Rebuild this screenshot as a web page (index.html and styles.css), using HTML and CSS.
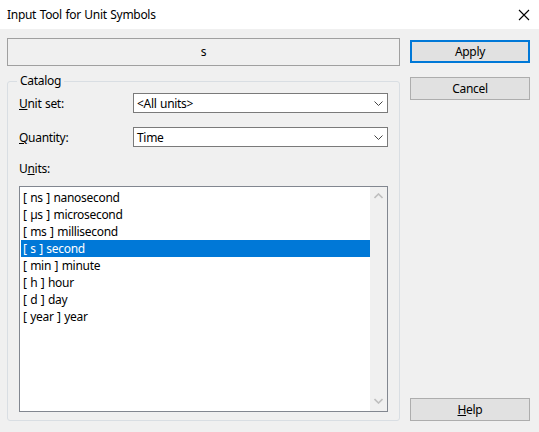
FILE: index.html
```html
<!DOCTYPE html>
<html>
<head>
<meta charset="utf-8">
<link rel="stylesheet" href="styles.css">
</head>
<body>
<div class="window">
  <div class="titlebar">
    <span class="title">Input Tool for Unit Symbols</span>
    <svg class="close" width="12" height="12" viewBox="0 0 12 12"><path d="M1 1 L11 11 M11 1 L1 11" stroke="#000" stroke-width="1.1" fill="none"/></svg>
  </div>
  <div class="main">
    <div class="left">
      <div class="field">s</div>
      <div class="group">
        <span class="legend">Catalog</span>
        <div class="row">
          <span class="label"><u>U</u>nit set:</span>
          <div class="select"><span>&lt;All units&gt;</span><svg class="chev" width="9" height="5" viewBox="0 0 9 5"><path d="M0.5 0.5 L4.5 4.5 L8.5 0.5" stroke="#444" fill="none"/></svg></div>
        </div>
        <div class="row row2">
          <span class="label"><u>Q</u>uantity:</span>
          <div class="select"><span>Time</span><svg class="chev" width="9" height="5" viewBox="0 0 9 5"><path d="M0.5 0.5 L4.5 4.5 L8.5 0.5" stroke="#444" fill="none"/></svg></div>
        </div>
        <div class="units-label">U<u>n</u>its:</div>
        <div class="listbox">
          <div class="items">
            <div class="item">[ ns ] nanosecond</div>
            <div class="item">[ µs ] microsecond</div>
            <div class="item">[ ms ] millisecond</div>
            <div class="item sel">[ s ] second</div>
            <div class="item">[ min ] minute</div>
            <div class="item">[ h ] hour</div>
            <div class="item">[ d ] day</div>
            <div class="item">[ year ] year</div>
          </div>
          <div class="scrollbar">
            <svg width="9" height="6" viewBox="0 0 9 6"><path d="M0.5 5 L4.5 1 L8.5 5" stroke="#bfbfbf" stroke-width="1.6" fill="none"/></svg>
            <svg width="9" height="6" viewBox="0 0 9 6"><path d="M0.5 1 L4.5 5 L8.5 1" stroke="#bfbfbf" stroke-width="1.6" fill="none"/></svg>
          </div>
        </div>
      </div>
    </div>
    <div class="right">
      <div class="btn apply">Apply</div>
      <div class="btn cancel">Cancel</div>
      <div class="btn help"><u>H</u>elp</div>
    </div>
  </div>
</div>
</body>
</html>
```
FILE: styles.css
```css
* { box-sizing: border-box; }
html, body { margin: 0; padding: 0; }
body {
  width: 539px;
  height: 432px;
  background: #f0f0f0;
  font-family: "Noto Sans", "Open Sans", sans-serif;
  font-size: 12px;
  letter-spacing: -0.3px;
  word-spacing: 0.7px;
  color: #000;
  overflow: hidden;
}
.window { display: flex; flex-direction: column; height: 432px; }
.titlebar {
  height: 29px;
  background: #fff;
  display: flex;
  align-items: center;
  justify-content: space-between;
  padding: 0 9px 0 7px;
}
.title { line-height: 16px; }
.close { display: block; }
.main {
  flex: 1;
  display: flex;
  padding: 9px 9px 11px 7px;
}
.left { width: 393px; display: flex; flex-direction: column; }
.field {
  height: 28px;
  border: 1px solid #a0a0a0;
  display: flex;
  align-items: center;
  justify-content: center;
  padding-bottom: 1px;
}
.group {
  position: relative;
  margin-top: 15px;
  flex: 1;
  border: 1px solid #d9dee3;
  border-radius: 3px;
  padding: 11px 11px 8px 11px;
  display: flex;
  flex-direction: column;
}
.legend {
  position: absolute;
  left: 9px;
  top: -9px;
  padding: 0 3px;
  background: #f0f0f0;
  line-height: 16px;
}
.row { display: flex; align-items: center; height: 20px; }
.row2 { margin-top: 14px; }
.label { width: 114px; }
.select {
  width: 255px;
  height: 20px;
  background: #fff;
  border: 1px solid #7a7a7a;
  display: flex;
  align-items: center;
  justify-content: space-between;
  padding: 0 4px 0 3px;
}
.chev { display: block; }
.units-label { margin-top: 13px; height: 17px; line-height: 17px; }
.listbox {
  margin-top: 9px;
  height: 226px;
  border: 1px solid #828790;
  background: #fff;
  display: flex;
}
.items { flex: 1; padding: 2px 0 0 1px; }
.item { height: 17px; line-height: 17px; padding-left: 2px; }
.item.sel { background: #0078d7; color: #fff; }
.scrollbar {
  width: 17px;
  background: #f0f0f0;
  display: flex;
  flex-direction: column;
  justify-content: space-between;
  align-items: center;
  padding: 6px 0 7px;
}
.scrollbar svg { display: block; }
.right {
  margin-left: 10px;
  width: 120px;
  display: flex;
  flex-direction: column;
}
.btn {
  height: 23px;
  background: #e1e1e1;
  border: 1px solid #adadad;
  display: flex;
  align-items: center;
  justify-content: center;
}
.apply { margin-top: 2px; border: 2px solid #0078d7; }
.cancel { margin-top: 14px; }
.help { margin-top: auto; }
```
